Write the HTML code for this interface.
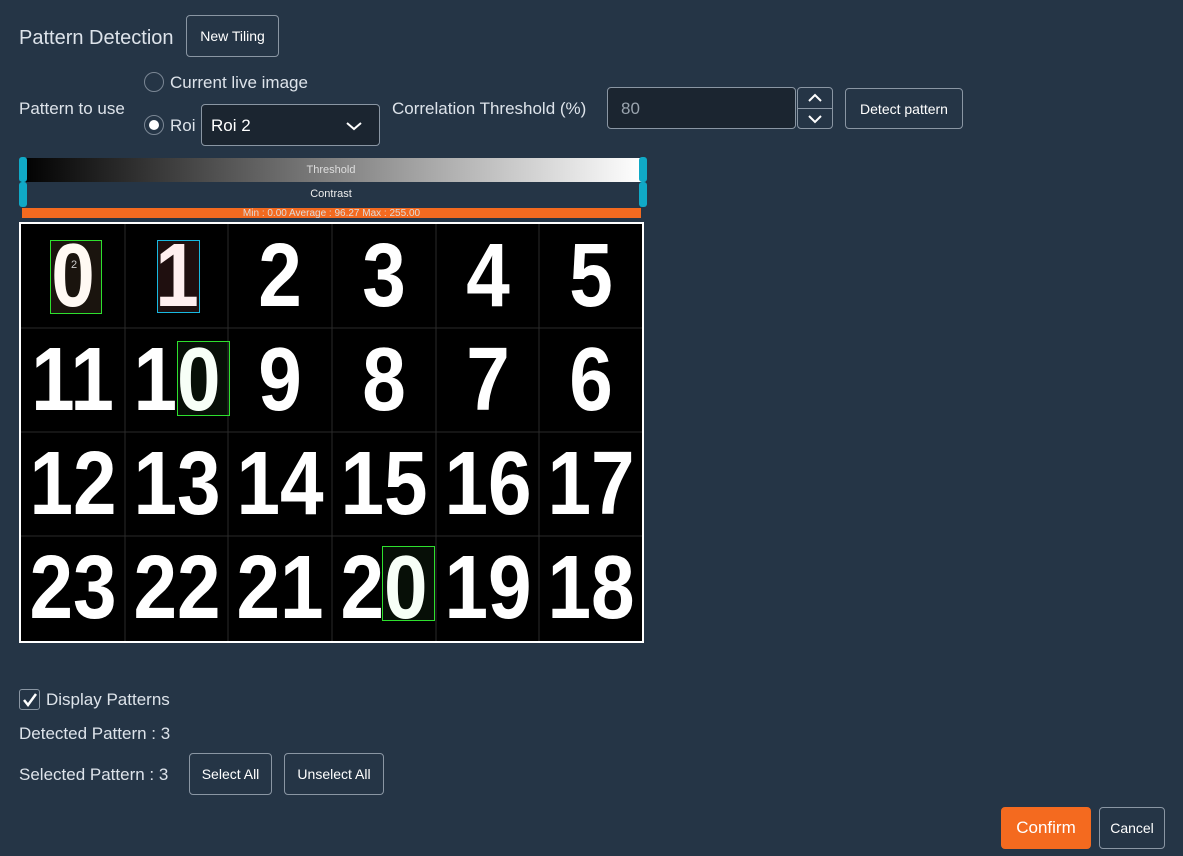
<!DOCTYPE html><html><head><style>
body{margin:0;width:1183px;height:856px;background:#253546;font-family:"Liberation Sans",sans-serif;color:#dde3ea;position:relative;overflow:hidden}
.a{position:absolute;white-space:nowrap}
.btn{position:absolute;border:1px solid #8a96a3;border-radius:4px;color:#fff;font-size:14px;display:flex;align-items:center;justify-content:center;box-sizing:border-box}
.lbl{font-size:17px}
.cell{position:absolute;width:103.8px;height:104.5px;display:flex;align-items:center;justify-content:center;color:#fff;font-weight:bold;font-size:90px;letter-spacing:0;line-height:1}
.cell span{display:inline-block;transform:scaleX(.87)}
</style></head><body>
<div class="a" style="left:19px;top:27px;font-size:20px">Pattern Detection</div>
<div class="btn" style="left:186px;top:15px;width:93px;height:42px">New Tiling</div>
<div class="a lbl" style="left:19px;top:99px">Pattern to use</div>
<div class="a" style="left:144px;top:72px;width:20px;height:20px;border:1px solid #7a8694;border-radius:50%;box-sizing:border-box"></div>
<div class="a lbl" style="left:170px;top:73px">Current live image</div>
<div class="a" style="left:144px;top:115px;width:20px;height:20px;border:1px solid #7a8694;border-radius:50%;box-sizing:border-box"><div style="position:absolute;left:4px;top:4px;width:10px;height:10px;background:#fff;border-radius:50%"></div></div>
<div class="a lbl" style="left:170px;top:116px">Roi</div>
<div class="a" style="left:201px;top:104px;width:179px;height:42px;background:#1b2530;border:1px solid #8a96a3;border-radius:4px;box-sizing:border-box"><span style="position:absolute;left:9px;top:11px;font-size:17px;color:#fff">Roi 2</span>
<svg style="position:absolute;left:144px;top:16px" width="16" height="10"><path d="M1 2 L8 8 L15 2" stroke="#fff" stroke-width="2" fill="none"/></svg></div>
<div class="a lbl" style="left:392px;top:99px">Correlation Threshold (%)</div>
<div class="a" style="left:607px;top:87px;width:189px;height:42px;background:#1b2530;border:1px solid #8a96a3;border-radius:4px;box-sizing:border-box"><span style="position:absolute;left:13px;top:11px;font-size:17px;color:#9aa4ae">80</span></div>
<div class="a" style="left:797px;top:87px;width:36px;height:42px;border:1px solid #8a96a3;border-radius:4px;box-sizing:border-box"><div style="position:absolute;left:0;right:0;top:20px;border-top:1px solid #8a96a3"></div>
<svg style="position:absolute;left:9px;top:5px" width="16" height="10"><path d="M2 8 L8 2 L14 8" stroke="#fff" stroke-width="2" fill="none"/></svg>
<svg style="position:absolute;left:9px;top:26px" width="16" height="10"><path d="M2 2 L8 8 L14 2" stroke="#fff" stroke-width="2" fill="none"/></svg></div>
<div class="btn" style="left:845px;top:88px;width:118px;height:41px">Detect pattern</div>
<div class="a" style="left:20px;top:158px;width:622px;height:24px;background:linear-gradient(90deg,#000,#fff)"><div style="text-align:center;font-size:11px;color:#ddd;line-height:24px">Threshold</div></div>
<div class="a" style="left:20px;top:182px;width:622px;height:24px"><div style="text-align:center;font-size:11px;color:#eee;line-height:24px">Contrast</div></div>
<div class="a" style="left:19px;top:157px;width:8px;height:25px;background:#10a9c6;border-radius:3px"></div>
<div class="a" style="left:639px;top:157px;width:8px;height:25px;background:#10a9c6;border-radius:3px"></div>
<div class="a" style="left:19px;top:182px;width:8px;height:25px;background:#10a9c6;border-radius:3px"></div>
<div class="a" style="left:639px;top:182px;width:8px;height:25px;background:#10a9c6;border-radius:3px"></div>
<div class="a" style="left:22px;top:208px;width:619px;height:10px;background:#f36a20;font-size:10px;color:#ddd;text-align:center;line-height:12px">Min : 0.00 Average : 96.27 Max : 255.00</div>
<div class="a" style="left:19px;top:222px;width:621px;height:417px;background:#000;border:2px solid #fff;overflow:hidden">
<svg class="a" style="left:0;top:0" width="621" height="417"><g stroke="#2a2a2a" stroke-width="1"><path d="M104 0V417M207 0V417M311 0V417M415 0V417M518 0V417M0 104H621M0 208H621M0 312H621"/></g></svg>
<div class="cell" style="left:0;top:0"><span>0</span></div><div class="cell" style="left:104px;top:0"><span>1</span></div><div class="cell" style="left:207px;top:0"><span>2</span></div><div class="cell" style="left:311px;top:0"><span>3</span></div><div class="cell" style="left:415px;top:0"><span>4</span></div><div class="cell" style="left:518px;top:0"><span>5</span></div>
<div class="cell" style="left:0;top:104px"><span>11</span></div><div class="cell" style="left:104px;top:104px"><span>10</span></div><div class="cell" style="left:207px;top:104px"><span>9</span></div><div class="cell" style="left:311px;top:104px"><span>8</span></div><div class="cell" style="left:415px;top:104px"><span>7</span></div><div class="cell" style="left:518px;top:104px"><span>6</span></div>
<div class="cell" style="left:0;top:208px"><span>12</span></div><div class="cell" style="left:104px;top:208px"><span>13</span></div><div class="cell" style="left:207px;top:208px"><span>14</span></div><div class="cell" style="left:311px;top:208px"><span>15</span></div><div class="cell" style="left:415px;top:208px"><span>16</span></div><div class="cell" style="left:518px;top:208px"><span>17</span></div>
<div class="cell" style="left:0;top:312px"><span>23</span></div><div class="cell" style="left:104px;top:312px"><span>22</span></div><div class="cell" style="left:207px;top:312px"><span>21</span></div><div class="cell" style="left:311px;top:312px"><span>20</span></div><div class="cell" style="left:415px;top:312px"><span>19</span></div><div class="cell" style="left:518px;top:312px"><span>18</span></div>
<div class="a" style="left:29px;top:16px;width:50px;height:72px;border:1px solid #2ee02e;background:rgba(255,200,140,.1)"><span style="position:absolute;left:20px;top:18px;font-size:11px;color:#ccc">2</span></div>
<div class="a" style="left:136px;top:16px;width:41px;height:71px;border:1px solid #18b8e0;background:rgba(255,120,120,.12)"></div>
<div class="a" style="left:156px;top:117px;width:51px;height:73px;border:1px solid #2ee02e;background:rgba(120,255,120,.06)"></div>
<div class="a" style="left:361px;top:322px;width:51px;height:73px;border:1px solid #2ee02e;background:rgba(120,255,120,.06)"></div>
</div>
<div class="a" style="left:19px;top:689px;width:21px;height:21px;border:1px solid #8a96a3;border-radius:3px;box-sizing:border-box"><svg style="position:absolute;left:2px;top:2px" width="16" height="16"><path d="M2 8 L6 13 L14 2" stroke="#fff" stroke-width="2.5" fill="none"/></svg></div>
<div class="a lbl" style="left:46px;top:690px">Display Patterns</div>
<div class="a lbl" style="left:19px;top:724px">Detected Pattern : 3</div>
<div class="a lbl" style="left:19px;top:765px">Selected Pattern : 3</div>
<div class="btn" style="left:189px;top:753px;width:83px;height:42px">Select All</div>
<div class="btn" style="left:284px;top:753px;width:100px;height:42px">Unselect All</div>
<div class="btn" style="left:1001px;top:807px;width:90px;height:42px;background:#f46a1f;border-color:#f46a1f;font-size:17px">Confirm</div>
<div class="btn" style="left:1099px;top:807px;width:66px;height:42px">Cancel</div>
</body></html>
